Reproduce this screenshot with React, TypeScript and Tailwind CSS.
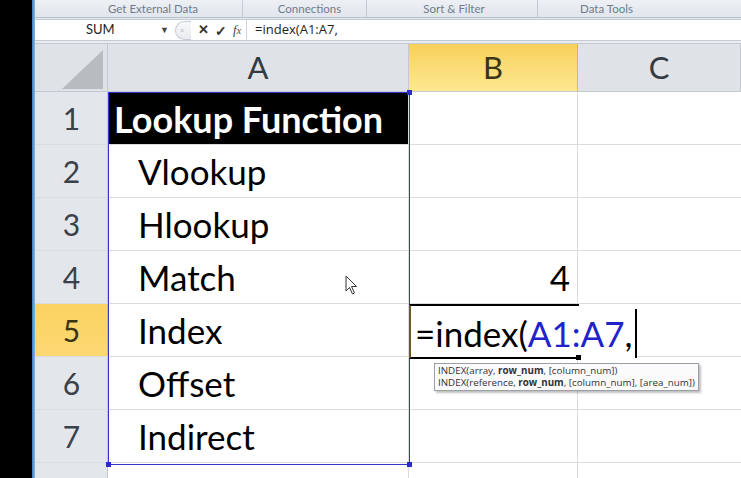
import React from 'react';

const COLS = [
  { key: 'A', width: 'w-[301px]' },
  { key: 'B', width: 'w-[169px]' },
  { key: 'C', width: 'flex-1' },
];

const ROWS: { n: number; a: string; b?: string }[] = [
  { n: 1, a: 'Lookup Function' },
  { n: 2, a: 'Vlookup' },
  { n: 3, a: 'Hlookup' },
  { n: 4, a: 'Match', b: '4' },
  { n: 5, a: 'Index' },
  { n: 6, a: 'Offset' },
  { n: 7, a: 'Indirect' },
];

function RibbonLabels() {
  return (
    <div className="flex h-[18px] border-b border-[#b7c1cc] bg-gradient-to-b from-[#edf0f4] to-[#e1e6ec] text-[11.5px] leading-[18px] text-[#6f7c8c]">
      <div className="w-[208px] border-r border-[#c3ccd6] text-right pr-[44px]">Get External Data</div>
      <div className="w-[124px] border-r border-[#c3ccd6] text-center pl-[10px]">Connections</div>
      <div className="w-[171px] border-r border-[#c3ccd6] text-center pl-[4px]">Sort &amp; Filter</div>
      <div className="flex-1 text-center pr-[66px]">Data Tools</div>
    </div>
  );
}

function FormulaBar() {
  return (
    <div className="mt-[1px] flex h-[22px] items-center border-y border-[#c2cad4] bg-white text-[13px] text-[#222]">
      <div className="flex w-[140px] items-center justify-between pl-[51px] pr-[6px]">
        <span>SUM</span>
        <span className="text-[9px] text-[#444]">▼</span>
      </div>
      <div className="flex h-full items-center">
        <div className="h-[19px] w-[16px] rounded-l-full border border-r-0 border-[#c5ccd4] bg-gradient-to-b from-[#f7f8fa] to-[#e8ebef] pl-[4px] text-[7px] leading-[17px] text-[#b4bac2]">
          ≡
        </div>
        <span className="ml-[7px] text-[13px] font-bold text-[#333]">✕</span>
        <span className="ml-[6px] text-[14px] font-bold text-[#333]">✓</span>
        <span className="ml-[6px] font-['Liberation_Serif',serif] text-[13px] italic text-[#444]">
          f<span className="text-[10px]">x</span>
        </span>
        <div className="ml-[5px] h-full w-px bg-[#d0d6dd]" />
      </div>
      <div className="pl-[8px] font-['Open_Sans',sans-serif] text-[13px]">=index(A1:A7,</div>
    </div>
  );
}

function ColumnHeaders() {
  return (
    <div className="flex h-[49px] border-b border-[#c4c9cf]">
      <div className="relative w-[73px] border-r border-[#c4c9cf] bg-[#dfe3e8]">
        <svg className="absolute left-[27px] top-[6px]" width="42" height="40" viewBox="0 0 42 40">
          <polygon points="41,0 41,39 0,39" fill="#b8bcc1" />
        </svg>
      </div>
      {COLS.map((c) => (
        <div
          key={c.key}
          className={`${c.width} flex items-center justify-center border-r text-[31px] ${
            c.key === 'B'
              ? 'border-[#e2b94a] bg-gradient-to-b from-[#f8d05a] to-[#fde891] text-[#3b3416]'
              : 'border-[#c4c9cf] bg-[#dfe3e8] text-[#333a44]'
          }`}
        >
          {c.key}
        </div>
      ))}
    </div>
  );
}

function Row({ n, a, b }: { n: number; a: string; b?: string }) {
  const selected = n === 5;
  return (
    <div className="flex h-[53px] shrink-0 border-b border-[#dadcde]">
      <div
        className={`flex w-[73px] items-center justify-center border-r pl-[1px] pt-[2px] text-[30px] ${
          selected
            ? 'border-[#e2b94a] bg-gradient-to-b from-[#fbd362] to-[#fdd872] text-[#3b3416]'
            : 'border-[#c4c9cf] bg-[#e3e6eb] text-[#3a414a]'
        }`}
      >
        {n}
      </div>
      <div
        className={`flex w-[301px] items-center border-r border-[#dadcde] pt-[2px] ${
          n === 1
            ? 'bg-black pl-[6px] text-[36px] font-bold text-white'
            : 'bg-white pl-[30px] text-[35px] text-black'
        }`}
      >
        {a}
      </div>
      <div className="flex w-[169px] items-center justify-end border-r border-[#dadcde] bg-white pr-[7px] pt-[2px] text-[35px] text-black">
        {b}
      </div>
      <div className="flex-1 bg-white" />
    </div>
  );
}

function Handle({ className }: { className: string }) {
  return <div className={`absolute h-[5px] w-[5px] bg-[#2a2ac8] ${className}`} />;
}

export default function App() {
  return (
    <div className="flex h-[478px] w-[741px] overflow-hidden bg-black font-['Lato','Open_Sans',sans-serif]">
      <div className="w-[32px] shrink-0 bg-black" />
      <div className="w-[3px] shrink-0 bg-gradient-to-r from-[#3d7fbf] to-[#8ab8e0]" />
      <div className="flex min-w-0 flex-1 flex-col bg-[#e6e9ee]">
        <RibbonLabels />
        <FormulaBar />
        <div className="h-[3px] border-b border-[#c4c9cf] bg-[#e9ecf0]" />
        <div className="relative flex flex-1 flex-col overflow-hidden">
          <ColumnHeaders />
          {ROWS.map((r) => (
            <Row key={r.n} {...r} />
          ))}
          <div className="flex h-[53px] shrink-0">
            <div className="w-[73px] border-r border-[#c4c9cf] bg-[#e3e6eb]" />
            <div className="w-[301px] border-r border-[#dadcde] bg-white" />
            <div className="w-[169px] border-r border-[#dadcde] bg-white" />
            <div className="flex-1 bg-white" />
          </div>

          {/* A1:A7 range highlight */}
          <div className="absolute left-[73px] top-[48px] h-[373px] w-[302px] border border-[#3535c9]" />
          <Handle className="left-[71px] top-[418px]" />
          <Handle className="left-[372px] top-[418px]" />
          <Handle className="left-[372px] top-[46px]" />

          {/* active cell B5 in edit mode */}
          <div className="absolute left-[374px] top-[260px] h-[55px] w-[170px] border-y-2 border-l-2 border-y-black border-l-[#6b5a22]" />
          <div className="absolute left-[376px] top-[262px] flex h-[51px] items-center bg-white pl-[4px] pt-[3px] text-[35px] leading-none text-black">
            <span>=index(</span>
            <span className="text-[#2222cc]">A1:A7</span>
            <span>,</span>
            <span className="ml-[2px] h-[49px] w-[2px] bg-black" />
          </div>
          <div className="absolute left-[541px] top-[311px] h-[5px] w-[5px] bg-black" />

          {/* function tooltip */}
          <div className="absolute left-[399px] top-[319px] border border-[#9aa0a8] bg-[#fbfbfb] px-[3px] py-[1px] font-['Open_Sans',sans-serif] text-[9.8px] leading-[12px] text-[#333] shadow-[2px_2px_2px_rgba(0,0,0,0.25)]">
            <div>
              INDEX(array, <b>row_num</b>, [column_num])
            </div>
            <div>
              INDEX(reference, <b>row_num</b>, [column_num], [area_num])
            </div>
          </div>

          {/* mouse pointer */}
          <svg className="absolute left-[310px] top-[231px]" width="13" height="21" viewBox="0 0 13 21">
            <path d="M1 1 L1 16 L4.5 12.5 L7.5 19 L9.5 18 L6.5 11.5 L11.5 11.5 Z" fill="white" stroke="#333" strokeWidth="1" strokeLinejoin="round" />
          </svg>
        </div>
      </div>
    </div>
  );
}
